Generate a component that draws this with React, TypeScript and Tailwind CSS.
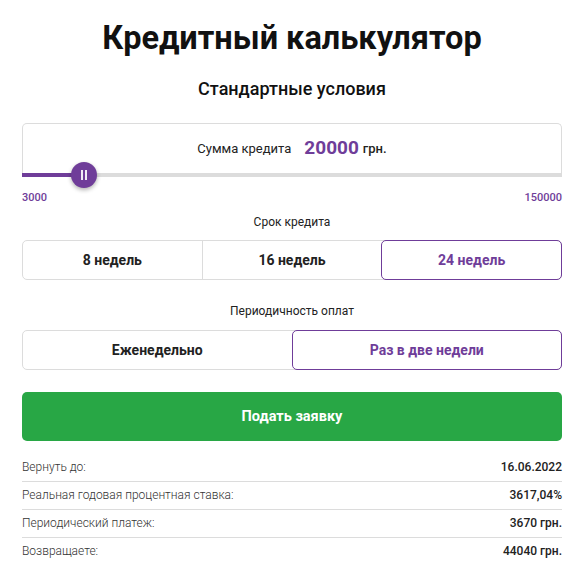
const PURPLE = '#6f3d99'

const terms = ['8 недель', '16 недель', '24 недель']
const periods = ['Еженедельно', 'Раз в две недели']

const summary = [
  { label: 'Вернуть до:', value: '16.06.2022' },
  { label: 'Реальная годовая процентная ставка:', value: '3617,04%' },
  { label: 'Периодический платеж:', value: '3670 грн.' },
  { label: 'Возвращаете:', value: '44040 грн.' },
]

const Segmented = ({ items, active }: { items: string[]; active: number }) => (
  <div className="flex h-[40px] rounded-[5px] border border-[#dcdcdc]">
    {items.map((item, idx) => {
      const selected = idx === active
      return (
        <button
          key={item}
          className={
            selected
              ? 'flex-1 -my-px -mr-px rounded-[5px] border border-[#6f3d99] text-[14px] font-bold text-[#6f3d99]'
              : idx === 0
                ? 'flex-1 text-[14px] font-bold text-[#222]'
                : 'flex-1 border-l border-[#dcdcdc] text-[14px] font-bold text-[#222]'
          }
        >
          {item}
        </button>
      )
    })}
  </div>
)

const App = () => {
  const percent = (20000 - 3000) / (150000 - 3000)

  return (
    <div className="w-[575px] bg-white pl-[22px] pr-[13px] pt-[18px] font-['Roboto',sans-serif] text-[#111]">
      <h1 className="text-center text-[32.5px] font-bold leading-[40px]">Кредитный калькулятор</h1>
      <h2 className="mt-[19px] text-center text-[18px] font-medium leading-[24px]">Стандартные условия</h2>

      <div className="mt-[22px]">
        <div className="flex h-[50px] items-center justify-center rounded-t-[5px] border-x border-t border-[#dcdcdc]">
          <span className="text-[13px] text-[#222]">Сумма кредита</span>
          <span className="ml-[13px] text-[19px] font-bold text-[#6f3d99]">20000</span>
          <span className="ml-[4px] text-[13px] font-medium text-[#222]">грн.</span>
        </div>
        <div className="relative h-[4px] bg-[#dcdcdc]">
          <div className="absolute left-0 top-0 h-[4px] bg-[#6f3d99]" style={{ width: `${percent * 100}%` }} />
          <div
            className="absolute top-1/2 flex h-[26px] w-[26px] -translate-x-1/2 -translate-y-1/2 items-center justify-center gap-[2px] rounded-full shadow-[0_2px_4px_rgba(0,0,0,0.3)]"
            style={{ left: `${percent * 100}%`, backgroundColor: PURPLE }}
          >
            <span className="h-[10px] w-[2px] bg-white/90" />
            <span className="h-[10px] w-[2px] bg-white/90" />
          </div>
        </div>
        <div className="mt-[14px] flex justify-between text-[11px] font-medium leading-[14px] text-[#6f3d99]">
          <span>3000</span>
          <span>150000</span>
        </div>
      </div>

      <p className="mt-[9px] text-center text-[12px] leading-[16px] text-[#222]">Срок кредита</p>
      <div className="mt-[10px]">
        <Segmented items={terms} active={2} />
      </div>

      <p className="mt-[23px] text-center text-[12px] leading-[16px] text-[#222]">Периодичность оплат</p>
      <div className="mt-[11px]">
        <Segmented items={periods} active={1} />
      </div>

      <button className="mt-[22px] flex h-[49px] w-full items-center justify-center rounded-[5px] bg-[#28a745] text-[14.5px] font-bold text-white">
        Подать заявку
      </button>

      <div className="mt-[13px]">
        {summary.map((row, idx) => (
          <div
            key={row.label}
            className={
              idx < summary.length - 1
                ? 'flex h-[28px] justify-between border-b border-[#dcdcdc] pt-[5px] text-[12px] leading-[16px]'
                : 'flex h-[28px] justify-between pt-[5px] text-[12px] leading-[16px]'
            }
          >
            <span className="font-light text-[#333]">{row.label}</span>
            <span className="font-medium text-[#222]">{row.value}</span>
          </div>
        ))}
      </div>
    </div>
  )
}

export default App
